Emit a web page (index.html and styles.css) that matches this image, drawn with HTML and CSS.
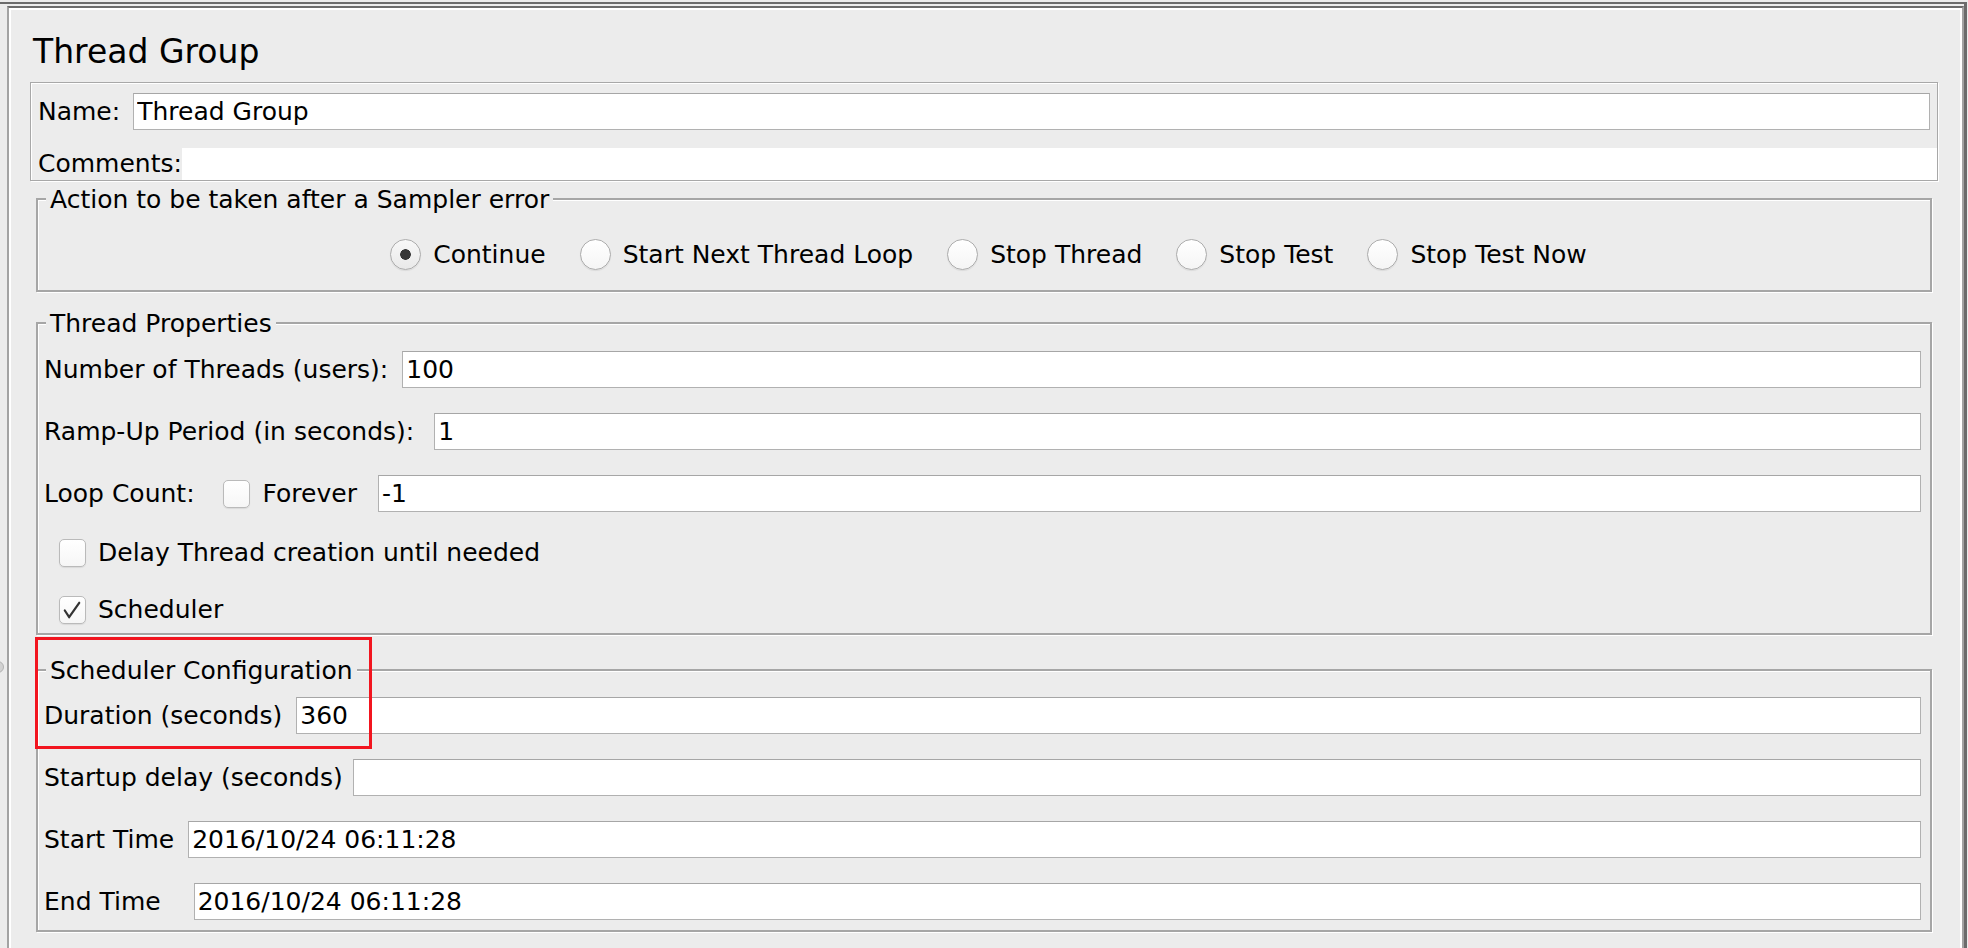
FILE: index.html
```html
<!DOCTYPE html>
<html lang="en">
<head>
    <meta charset="UTF-8">
    <title>Thread Group</title>
    <link rel="stylesheet" href="styles.css">
</head>
<body>
    <div class="frame">
        <div class="window">
            <h1 class="title">Thread Group</h1>

            <div class="name-box">
                <div class="name-row">
                    <span class="lbl">Name:</span>
                    <input class="field" type="text" value="Thread Group">
                </div>
                <div class="comments-row">
                    <span class="lbl">Comments:</span>
                    <div class="comments-area"></div>
                </div>
            </div>

            <fieldset class="group group-action">
                <legend>Action to be taken after a Sampler error</legend>
                <div class="radios">
                    <span class="radio-item"><span class="radio checked"></span>Continue</span>
                    <span class="radio-item"><span class="radio"></span>Start Next Thread Loop</span>
                    <span class="radio-item"><span class="radio"></span>Stop Thread</span>
                    <span class="radio-item"><span class="radio"></span>Stop Test</span>
                    <span class="radio-item"><span class="radio"></span>Stop Test Now</span>
                </div>
            </fieldset>

            <fieldset class="group group-threads">
                <legend>Thread Properties</legend>
                <div class="form-row">
                    <span class="lbl">Number of Threads (users):</span>
                    <input class="field" type="text" value="100">
                </div>
                <div class="form-row ramp">
                    <span class="lbl">Ramp-Up Period (in seconds):</span>
                    <input class="field" type="text" value="1">
                </div>
                <div class="form-row">
                    <span class="lbl">Loop Count:</span>
                    <span class="check-item loop-forever"><span class="check"></span>Forever</span>
                    <input class="field loop-field" type="text" value="-1">
                </div>
                <div class="form-row check-row">
                    <span class="check-item"><span class="check"></span>Delay Thread creation until needed</span>
                </div>
                <div class="form-row check-row">
                    <span class="check-item">
                        <span class="check">
                            <svg width="26" height="26" viewBox="0 0 26 26"><path d="M5 13.5 L9.5 20.5 L20 5.5" fill="none" stroke="#333" stroke-width="2.3" stroke-linecap="round" stroke-linejoin="round"/></svg>
                        </span>Scheduler
                    </span>
                </div>
            </fieldset>

            <fieldset class="group group-sched">
                <legend>Scheduler Configuration</legend>
                <div class="form-row">
                    <span class="lbl">Duration (seconds)</span>
                    <input class="field" type="text" value="360">
                </div>
                <div class="form-row startup">
                    <span class="lbl">Startup delay (seconds)</span>
                    <input class="field" type="text" value="">
                </div>
                <div class="form-row">
                    <span class="lbl">Start Time</span>
                    <input class="field" type="text" value="2016/10/24 06:11:28">
                </div>
                <div class="form-row end">
                    <span class="lbl">End Time</span>
                    <input class="field" type="text" value="2016/10/24 06:11:28">
                </div>
            </fieldset>

            <!-- annotation drawn over the screenshot -->
            <div class="highlight"></div>
        </div>
    </div>
    <span class="splitter-knob"></span>
</body>
</html>
```

FILE: styles.css
```css
* {
    box-sizing: border-box;
}

body {
    margin: 0;
    background-color: #ececec;
    font-family: "DejaVu Sans", sans-serif;
    font-size: 25px;
    color: #000;
    overflow: hidden;
}

.frame {
    margin: 2px 1px 0 0;
    padding-top: 2px;
    height: 946px;
    border-top: 2px solid #6b6b6b;
    border-right: 3px solid #6b6b6b;
}

.window {
    position: relative;
    height: 942px;
    margin-left: 7px;
    padding: 0 24px 0 21px;
    border-top: 2px solid #6b6b6b;
    border-left: 2px solid #a3a3a3;
    border-right: 2px solid #a3a3a3;
    box-shadow: inset 2px 2px 0 #fff, inset -2px 0 0 #fff;
}

.title {
    margin: 24px 0 10px;
    padding-left: 3px;
    font-size: 33px;
    font-weight: normal;
    line-height: 40px;
}

.lbl {
    flex-shrink: 0;
    white-space: nowrap;
    line-height: 30px;
}

.field {
    flex: 1;
    min-width: 0;
    height: 37px;
    padding: 0 3px;
    border: 1px solid #b1b1b1;
    border-top-color: #a6a6a6;
    background-color: #fff;
    font: inherit;
    color: #000;
    outline: none;
}

/* name / comments */
.name-box {
    padding-top: 10px;
    border: 1px solid #a8a8a8;
    box-shadow: inset 1px 1px 0 #fff, 1px 1px 0 #fff;
}

.name-row {
    display: flex;
    align-items: center;
    gap: 13px;
    height: 37px;
    padding: 0 7px;
}

.comments-row {
    display: flex;
    align-items: center;
    height: 32px;
    margin-top: 18px;
    padding-left: 7px;
}

.comments-area {
    flex: 1;
    height: 32px;
    background-color: #fff;
}

/* titled groups */
.group {
    min-width: 0;
    margin: 0 6px;
    border: 2px solid #a6a6a6;
    box-shadow: inset 1px 1px 0 #fff, 1px 1px 0 #fff;
}

.group legend {
    margin-left: 2px;
    padding: 3px 4px 0;
    line-height: 30px;
    background-color: #ececec;
}

.group-action {
    margin-top: 1px;
    padding: 23px 9px 20px 6px;
}

.group-threads {
    margin-top: 14px;
    padding: 12px 9px 7px 6px;
}

.group-sched {
    margin-top: 18px;
    padding: 11px 9px 10px 6px;
}

.radios {
    display: flex;
    justify-content: center;
    align-items: center;
    gap: 34px;
    height: 32px;
    padding-left: 12px;
}

.radio-item {
    display: flex;
    align-items: center;
    gap: 12px;
    white-space: nowrap;
}

.radio {
    width: 31px;
    height: 31px;
    border: 1px solid #acacac;
    border-radius: 50%;
    background: linear-gradient(#fff, #f5f5f5);
    box-shadow: 0 1px 1px rgba(0, 0, 0, 0.08);
}

.radio.checked {
    background: radial-gradient(circle, #383838 0 5px, transparent 5.6px), linear-gradient(#f8f8f8, #e9e9e9);
}

.form-row {
    display: flex;
    align-items: center;
    gap: 14px;
    height: 37px;
}

.form-row + .form-row {
    margin-top: 25px;
}

.form-row.ramp {
    gap: 20px;
}

.form-row.startup {
    gap: 10px;
}

.form-row.end {
    gap: 33px;
}

.check-row {
    height: 32px;
    padding-left: 15px;
}

.check-item {
    display: flex;
    align-items: center;
    gap: 12px;
    white-space: nowrap;
    line-height: 30px;
}

.loop-forever {
    margin-left: 14px;
    gap: 13px;
}

.loop-field {
    margin-left: 7px;
}

.check {
    display: flex;
    align-items: center;
    justify-content: center;
    width: 27px;
    height: 28px;
    border: 1px solid #bababa;
    border-radius: 5px;
    background: linear-gradient(#fff, #f6f6f6);
    box-shadow: 0 1px 1px rgba(0, 0, 0, 0.08);
}

.highlight {
    position: absolute;
    left: 26px;
    top: 629px;
    width: 337px;
    height: 112px;
    border: 3px solid #f2151f;
}

.splitter-knob {
    position: absolute;
    left: -8px;
    top: 661px;
    width: 12px;
    height: 12px;
    border: 1px solid #b3b3b3;
    border-radius: 50%;
    background-color: #d2d2d2;
}
```
